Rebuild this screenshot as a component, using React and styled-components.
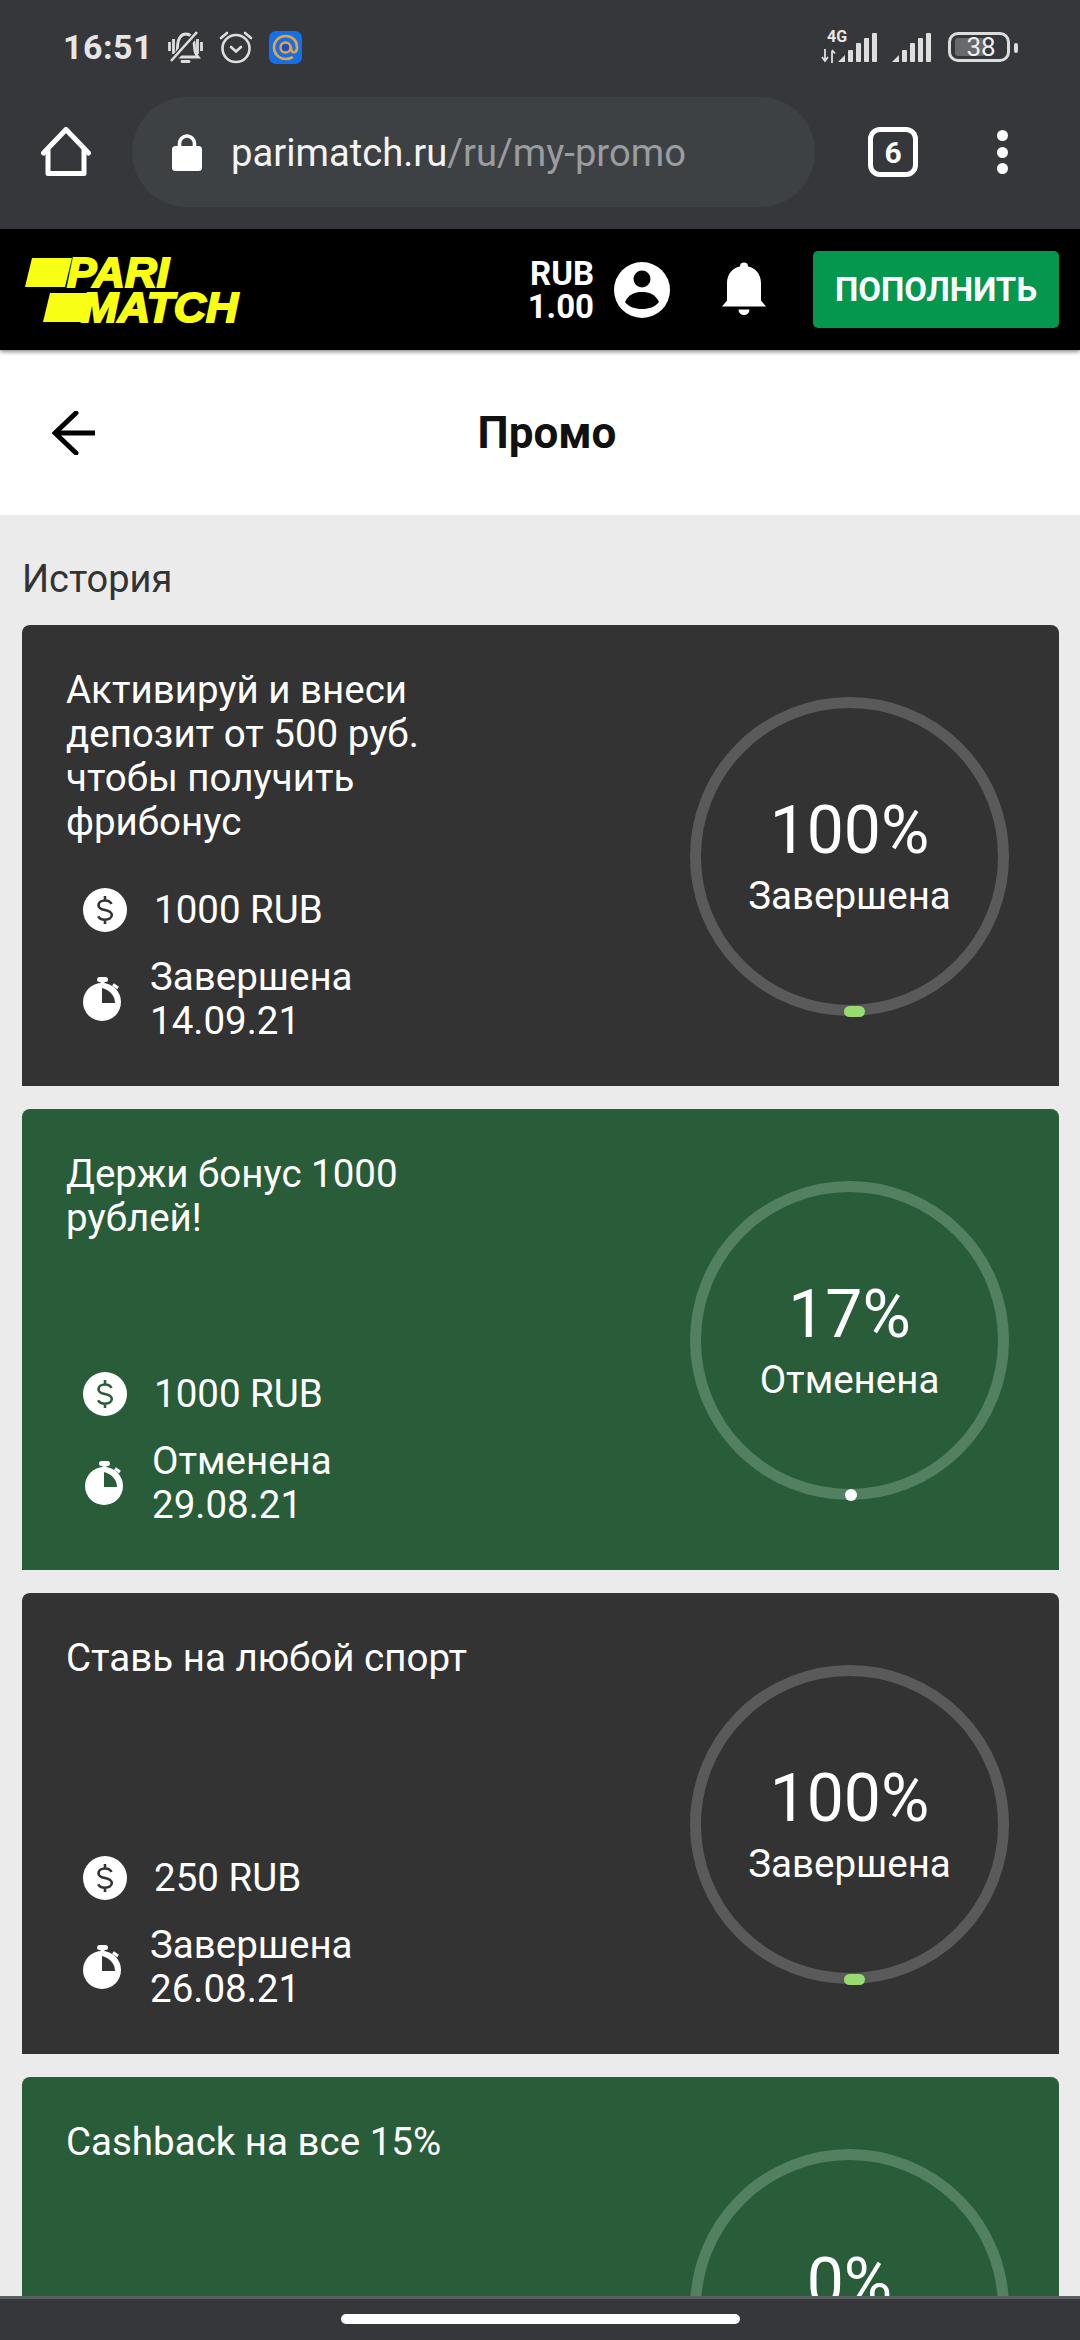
import React from "react";
import styled, { createGlobalStyle } from "styled-components";

const Global = createGlobalStyle`
  html, body { margin: 0; padding: 0; background: #36373b; }
  * { box-sizing: border-box; }
  body { font-family: Roboto, "Liberation Sans", sans-serif; }
`;

const Screen = styled.div`
  width: 1080px;
  height: 2340px;
  display: flex;
  flex-direction: column;
  overflow: hidden;
`;

const Chrome = styled.div`
  flex: none;
  height: 229px;
  background: #36373b;
`;

const StatusBar = styled.div`
  height: 94px;
  display: flex;
  align-items: center;
  padding: 0 70px 0 63px;
  color: #e6e6e6;
`;

const Time = styled.span`
  font-size: 34px;
  font-weight: 700;
  letter-spacing: 0.5px;
  width: 105px;
  line-height: 40px;
`;

const StatusIcons = styled.div`
  display: flex;
  align-items: center;
  gap: 16px;
`;

const Spacer = styled.div`
  flex: 1;
`;

const Signals = styled.div`
  display: flex;
  align-items: flex-end;
  gap: 14px;
  margin-right: 16px;
`;

const SignalGroup = styled.div`
  position: relative;
  height: 32px;
  display: flex;
  align-items: flex-end;
`;

const NetLabel = styled.span`
  position: absolute;
  left: 6px;
  top: -2px;
  font-size: 16px;
  line-height: 16px;
  font-weight: 700;
  color: #e6e6e6;
`;

const Battery = styled.div`
  position: relative;
  width: 62px;
  height: 30px;
  border: 3.5px solid #dcdcdc;
  border-radius: 10px;
  display: flex;
  align-items: center;
  justify-content: center;
`;

const BatteryFill = styled.div`
  position: absolute;
  left: 4px;
  top: 3px;
  bottom: 3px;
  width: 30px;
  border-radius: 3px;
  background: #68696b;
`;

const BatteryText = styled.span`
  position: relative;
  font-size: 26px;
  line-height: 24px;
  color: #f0f0f0;
  padding-left: 4px;
`;

const BatteryTip = styled.div`
  position: absolute;
  right: -11px;
  top: 8px;
  width: 4px;
  height: 10px;
  border-radius: 2px;
  background: #dcdcdc;
`;

const Toolbar = styled.div`
  height: 135px;
  padding: 3px 0 22px 41px;
  display: flex;
  align-items: center;
`;

const Omnibox = styled.div`
  width: 683px;
  height: 110px;
  margin-left: 41px;
  border-radius: 55px;
  background: #3e4144;
  display: flex;
  align-items: center;
  padding-left: 40px;
`;

const Url = styled.div`
  margin-left: 29px;
  margin-top: 2px;
  font-size: 38.2px;
  line-height: 44px;
  color: #f4f4f4;
  white-space: nowrap;
`;

const UrlPath = styled.span`
  color: #9a9da0;
`;

const TabCount = styled.div`
  width: 50px;
  height: 50px;
  margin-left: 53px;
  border: 5px solid #fff;
  border-radius: 12px;
  display: flex;
  align-items: center;
  justify-content: center;
  color: #fff;
  font-size: 30px;
  font-weight: 700;
`;

const Kebab = styled.div`
  margin-left: 79px;
  display: flex;
  flex-direction: column;
  gap: 5.5px;
`;

const KebabDot = styled.div`
  width: 11px;
  height: 11px;
  border-radius: 50%;
  background: #fff;
`;

const SiteHeader = styled.header`
  position: relative;
  z-index: 2;
  flex: none;
  height: 121px;
  background: #000;
  box-shadow: 0 2px 4px rgba(0, 0, 0, 0.45);
  display: flex;
  align-items: center;
  padding: 0 21px 0 24px;
`;

const LogoSvg = styled.svg`
  overflow: visible;
`;

const LogoText = styled.text`
  font-family: "Liberation Sans", sans-serif;
  font-weight: 700;
  font-style: italic;
  font-size: 42px;
  fill: #f9ff14;
  stroke: #f9ff14;
  stroke-width: 2px;
`;

const Balance = styled.div`
  margin-left: auto;
  text-align: right;
  color: #fff;
  font-size: 33px;
  font-weight: 700;
  line-height: 33px;
`;

const HeaderIcon = styled.div`
  margin-left: ${(p) => p.$gap}px;
  display: flex;
`;

const TopUp = styled.div`
  margin-left: 47px;
  width: 246px;
  height: 77px;
  border-radius: 5px;
  background: #04974e;
  color: #fff;
  font-size: 33px;
  font-weight: 700;
  display: flex;
  align-items: center;
  justify-content: center;
`;

const TitleBar = styled.div`
  flex: none;
  height: 165px;
  background: #fff;
  display: grid;
  grid-template-columns: 1fr auto 1fr;
  align-items: center;
  padding-left: 14px;
`;

const BackWrap = styled.div`
  padding-left: 38px;
  display: flex;
`;

const PageTitle = styled.h1`
  margin: 0;
  font-size: 44px;
  font-weight: 700;
  color: #111;
  line-height: 50px;
`;

const Content = styled.main`
  flex: 1;
  min-height: 0;
  overflow: hidden;
  background: #ebebeb;
  padding: 42px 21px 0 22px;
`;

const SectionLabel = styled.div`
  font-size: 38px;
  line-height: 44px;
  color: #333;
  margin-bottom: 24px;
`;

const CardList = styled.div`
  display: flex;
  flex-direction: column;
  gap: 23px;
`;

const Card = styled.section`
  flex: none;
  height: 461px;
  border-radius: 8px 8px 0 0;
  background: ${(p) => (p.$green ? "#295d39" : "#333333")};
  color: #fff;
  display: flex;
  justify-content: space-between;
  padding: 43px 50px 0 44px;
`;

const CardInfo = styled.div`
  width: 420px;
`;

const CardTitle = styled.div`
  font-size: 38.5px;
  line-height: 44px;
  height: 176px;
  margin-bottom: 44px;
`;

const InfoRow = styled.div`
  display: flex;
  align-items: center;
  gap: 27px;
  padding-left: ${(p) => 17 + (p.$shift || 0)}px;
  margin-bottom: 23px;
  font-size: 38.5px;
  line-height: 44px;
`;

const IconSlot = styled.div`
  flex: none;
  display: flex;
  margin-top: -1px;
`;

const Ring = styled.div`
  position: relative;
  flex: none;
  width: 319px;
  height: 319px;
  margin-top: 29px;
  border-radius: 50%;
  border: 11px solid ${(p) => (p.$green ? "#528060" : "#5a5a5a")};
  display: flex;
  flex-direction: column;
  align-items: center;
  padding-top: 85px;
`;

const Percent = styled.div`
  font-size: 66px;
  line-height: 76px;
`;

const RingLabel = styled.div`
  font-size: 38.5px;
  line-height: 44px;
  margin-top: 5px;
`;

const ProgressMark = styled.div`
  position: absolute;
  left: 50%;
  bottom: -11.5px;
  width: ${(p) => (p.$full ? 21 : 12)}px;
  height: ${(p) => (p.$full ? 11 : 12)}px;
  margin-left: ${(p) => (p.$full ? -6 : -5)}px;
  border-radius: 6px;
  background: ${(p) => (p.$full ? "#96dc6e" : "#fff")};
`;

const NavBar = styled.div`
  flex: none;
  height: 44px;
  background: #36373b;
  border-top: 3px solid #5a6163;
  display: flex;
  justify-content: center;
  padding-top: 15px;
`;

const NavHandle = styled.div`
  width: 399px;
  height: 10px;
  border-radius: 5px;
  background: #fff;
`;

const MutedBell = () => (
  <svg width="35" height="34" viewBox="0 0 35 34" fill="none" stroke="#dedede" strokeWidth="2.8">
    <path d="M6 27c2.500-3 3.500-5 3.500-10C9.500 9 13 4 18 4s8.500 5 8.500 13c0 5 1 7 3.500 10z" />
    <path d="M14 31.500h7" strokeLinecap="round" />
    <path d="M1.500 12v9M5.500 9v15M29.500 9v15M33.500 12v9" />
    <path d="M3 32L30 2" stroke="#36373b" strokeWidth="6.500" />
    <path d="M3 31L29 2" strokeWidth="2.600" />
  </svg>
);

const Alarm = () => (
  <svg width="34" height="34" viewBox="0 0 34 34" fill="none" stroke="#dedede" strokeWidth="2.6" strokeLinecap="round">
    <circle cx="17" cy="18.500" r="13.500" />
    <path d="M12 17l5 4.500 5-4.500" />
    <path d="M2 8l6-5M32 8l-6-5" />
  </svg>
);

const MailApp = () => (
  <svg width="33" height="33" viewBox="0 0 33 33" fill="none">
    <rect width="33" height="33" rx="7" fill="#1570e8" />
    <circle cx="16.500" cy="16.500" r="5" fill="#1d4fc4" stroke="#e9a33c" strokeWidth="2.400" />
    <path d="M22 16.500c0 3 1 4.800 3 4.800s3-2.500 3-5.300C28 9.500 23 5 16.500 5S5 10 5 16.500 10 28 16.500 28c2.500 0 4.500-.5 6.500-1.500" stroke="#e9a33c" strokeWidth="2.600" strokeLinecap="round" />
  </svg>
);

const Bars = () => (
  <svg width="40" height="30" viewBox="0 0 40 30" fill="#dedede">
    <path d="M0 29L7 22V29Z" />
    <rect x="10" y="17" width="5" height="12" rx="1" />
    <rect x="18" y="10" width="5" height="19" rx="1" />
    <rect x="26" y="5" width="5" height="24" rx="1" />
    <rect x="34" y="0" width="5" height="29" rx="1" />
  </svg>
);

const DataArrows = () => (
  <svg width="17" height="14" viewBox="0 0 17 14" fill="none" stroke="#dedede" strokeWidth="1.800">
    <path d="M4 0v11M1 8l3 4 3-4" />
    <path d="M11 14V2M11 1l3 3.500" />
  </svg>
);

const Home = () => (
  <svg width="50" height="50" viewBox="0 0 50 50" fill="none" stroke="#fff" strokeWidth="5" strokeLinejoin="round" strokeLinecap="round">
    <path d="M2.500 26L25 2.500 47.500 26" />
    <path d="M7 23v23.500h36V23" />
  </svg>
);

const Lock = () => (
  <svg width="30" height="38" viewBox="0 0 30 38" fill="none">
    <path d="M7.500 15V10.500a7.500 7.500 0 0 1 15 0V15" stroke="#fff" strokeWidth="3.600" />
    <rect y="13" width="30" height="25" rx="3.500" fill="#fff" />
  </svg>
);

const Logo = () => (
  <LogoSvg width="216" height="66" viewBox="0 0 216 66">
    <path d="M1 30L8 1H48L41 30Z" fill="#f9ff14" />
    <path d="M19 65L26 36H68L60 65Z" fill="#f9ff14" />
    <LogoText x="43" y="30" textLength="102" lengthAdjust="spacingAndGlyphs">PARI</LogoText>
    <LogoText x="57" y="65" textLength="157" lengthAdjust="spacingAndGlyphs">MATCH</LogoText>
  </LogoSvg>
);

const Avatar = () => (
  <svg width="56" height="56" viewBox="0 0 56 56">
    <circle cx="28" cy="28" r="28" fill="#fff" />
    <circle cx="28" cy="17" r="8.500" fill="#000" />
    <path d="M11 40c4-8 10-10 17-10s13 2 17 10c-4 5-10 7-17 7s-13-2-17-7z" fill="#000" />
  </svg>
);

const Bell = () => (
  <svg width="44" height="55" viewBox="0 0 44 55" fill="#fff">
    <circle cx="22" cy="4.500" r="4" />
    <path d="M0 44.500l5-6V21C5 11 12 4 22 4s17 7 17 17v17.500l5 6z" />
    <path d="M16.500 47.500h11a5.500 5.500 0 0 1-11 0z" />
  </svg>
);

const BackArrow = () => (
  <svg width="44" height="44" viewBox="0 0 44 44" fill="none" stroke="#000" strokeWidth="5" strokeLinecap="round">
    <path d="M43 22H3" strokeLinecap="butt" />
    <path d="M24 2L3 22l21 20" />
  </svg>
);

const DollarIcon = ({ bg }) => (
  <svg width="44" height="44" viewBox="0 0 44 44" fill="none">
    <circle cx="22" cy="22" r="22" fill="#fff" />
    <path d="M28.500 16c-1-2.200-3.300-3.500-6.500-3.500-3.800 0-6.500 1.900-6.500 4.700s2.300 4 6.500 4.900 6.800 2.200 6.800 5-2.900 4.600-6.800 4.600c-3.400 0-5.800-1.300-6.800-3.500M22 8v4.500M22 31.700v4.300" stroke={bg} strokeWidth="2.600" />
  </svg>
);

const TimerIcon = ({ bg }) => (
  <svg width="40" height="44" viewBox="0 0 40 44">
    <rect x="14" y="0" width="11" height="5" rx="2.500" fill="#fff" />
    <rect x="17.500" y="3" width="4" height="5" fill="#fff" />
    <path d="M30 7.500l5 3.500" stroke="#fff" strokeWidth="3" />
    <circle cx="19" cy="25" r="19" fill="#fff" />
    <path d="M19 11V26H32C32 19 27 13 19 11Z" fill={bg} />
  </svg>
);

const cards = [
  { title: "Активируй и внеси депозит от 500 руб. чтобы получить фрибонус", amount: "1000 RUB", status: "Завершена", date: "14.09.21", pct: "100%" },
  { title: "Держи бонус 1000 рублей!", amount: "1000 RUB", status: "Отменена", date: "29.08.21", pct: "17%", green: true },
  { title: "Ставь на любой спорт", amount: "250 RUB", status: "Завершена", date: "26.08.21", pct: "100%" },
  { title: "Cashback на все 15%", amount: "", status: "", date: "", pct: "0%", green: true },
];

const PromoCard = ({ title, amount, status, date, pct, green }) => {
  const bg = green ? "#295d39" : "#333333";
  return (
    <Card $green={green}>
      <CardInfo>
        <CardTitle>{title}</CardTitle>
        {amount && (
          <InfoRow>
            <IconSlot><DollarIcon bg={bg} /></IconSlot>
            <span>{amount}</span>
          </InfoRow>
        )}
        {date && (
          <InfoRow $shift={green ? 2 : 0}>
            <IconSlot><TimerIcon bg={bg} /></IconSlot>
            <span>{status}<br />{date}</span>
          </InfoRow>
        )}
      </CardInfo>
      <Ring $green={green}>
        <Percent>{pct}</Percent>
        {status && <RingLabel>{status}</RingLabel>}
        {status && <ProgressMark $full={pct === "100%"} />}
      </Ring>
    </Card>
  );
};

export default function App() {
  return (
    <Screen>
      <Global />
      <Chrome>
        <StatusBar>
          <Time>16:51</Time>
          <StatusIcons>
            <MutedBell />
            <Alarm />
            <MailApp />
          </StatusIcons>
          <Spacer />
          <Signals>
            <SignalGroup>
              <NetLabel>4G</NetLabel>
              <DataArrows />
              <Bars />
            </SignalGroup>
            <SignalGroup>
              <Bars />
            </SignalGroup>
          </Signals>
          <Battery>
            <BatteryFill />
            <BatteryText>38</BatteryText>
            <BatteryTip />
          </Battery>
        </StatusBar>
        <Toolbar>
          <Home />
          <Omnibox>
            <Lock />
            <Url>parimatch.ru<UrlPath>/ru/my-promo</UrlPath></Url>
          </Omnibox>
          <TabCount>6</TabCount>
          <Kebab>
            <KebabDot />
            <KebabDot />
            <KebabDot />
          </Kebab>
        </Toolbar>
      </Chrome>
      <SiteHeader>
        <Logo />
        <Balance>RUB<br />1.00</Balance>
        <HeaderIcon $gap={20}><Avatar /></HeaderIcon>
        <HeaderIcon $gap={52}><Bell /></HeaderIcon>
        <TopUp>ПОПОЛНИТЬ</TopUp>
      </SiteHeader>
      <TitleBar>
        <BackWrap><BackArrow /></BackWrap>
        <PageTitle>Промо</PageTitle>
      </TitleBar>
      <Content>
        <SectionLabel>История</SectionLabel>
        <CardList>
          {cards.map((c) => (
            <PromoCard key={c.title} {...c} />
          ))}
        </CardList>
      </Content>
      <NavBar>
        <NavHandle />
      </NavBar>
    </Screen>
  );
}
